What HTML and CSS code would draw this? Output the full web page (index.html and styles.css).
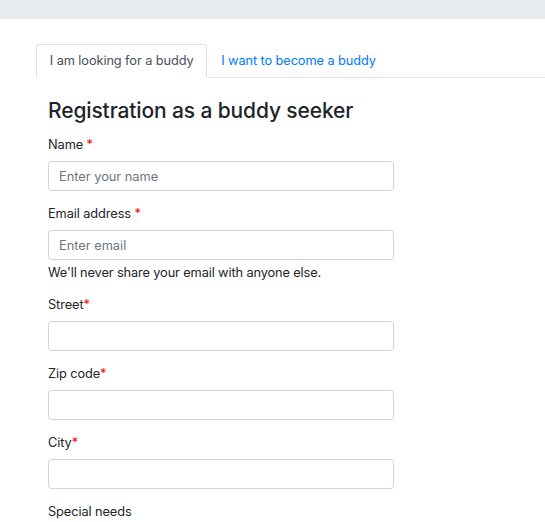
FILE: index.html
```html
<!DOCTYPE html>
<html>
<head>
<meta charset="utf-8">
<link rel="stylesheet" href="styles.css">
</head>
<body>
<div class="topbar"></div>
<main class="page">
  <ul class="tabs">
    <li><a class="tab active" href="#">I am looking for a buddy</a></li>
    <li><a class="tab" href="#">I want to become a buddy</a></li>
  </ul>
  <section class="pane">
    <h3 class="title">Registration as a buddy seeker</h3>
    <form class="form">
      <div class="group">
        <label class="label">Name <span class="req">*</span></label>
        <input class="input" type="text" placeholder="Enter your name">
      </div>
      <div class="group">
        <label class="label">Email address <span class="req">*</span></label>
        <input class="input" type="email" placeholder="Enter email">
        <small class="help">We'll never share your email with anyone else.</small>
      </div>
      <div class="group">
        <label class="label">Street<span class="req">*</span></label>
        <input class="input" type="text">
      </div>
      <div class="group">
        <label class="label">Zip code<span class="req">*</span></label>
        <input class="input" type="text">
      </div>
      <div class="group">
        <label class="label">City<span class="req">*</span></label>
        <input class="input" type="text">
      </div>
      <div class="group">
        <label class="label">Special needs</label>
      </div>
    </form>
  </section>
</main>
</body>
</html>
```
FILE: styles.css
```css
* { box-sizing: border-box; }
html, body { margin: 0; padding: 0; background: #fff; }
body {
  font-family: Inter, "Liberation Sans", Arial, sans-serif;
  font-size: 12.8px;
  line-height: 19.2px;
  letter-spacing: -0.1px;
  color: #212529;
  overflow: hidden;
}
.topbar { height: 19px; background: #e9ecef; }
.page { padding: 25px 0 0 36px; }
.tabs {
  list-style: none;
  margin: 0;
  padding: 0;
  display: flex;
  border-bottom: 1px solid #dee2e6;
}
.tab {
  display: block;
  padding: 6.4px 12.8px;
  border: 1px solid transparent;
  border-top-left-radius: 3.2px;
  border-top-right-radius: 3.2px;
  margin-bottom: -1px;
  color: #007bff;
  text-decoration: none;
}
.tab.active {
  color: #495057;
  background: #fff;
  border-color: #dee2e6 #dee2e6 #fff;
}
.pane { padding: 0 0 0 12px; }
.title {
  margin: 20px 0 12.5px;
  font-size: 21px;
  line-height: 25px;
  font-weight: 500;
  letter-spacing: -0.13px;
}
.group { margin-bottom: 12.8px; }
.label { display: block; margin-bottom: 6.4px; }
.req { color: #ff0000; }
.input {
  display: block;
  width: 346px;
  height: 30.4px;
  padding: 5px 10px;
  font: inherit;
  color: #495057;
  border: 1px solid #ced4da;
  border-radius: 3.2px;
  background: #fff;
}
.input::placeholder { color: #6c757d; }
.help { display: block; margin-top: 3.2px; font-size: 12.8px; letter-spacing: -0.13px; }
```
